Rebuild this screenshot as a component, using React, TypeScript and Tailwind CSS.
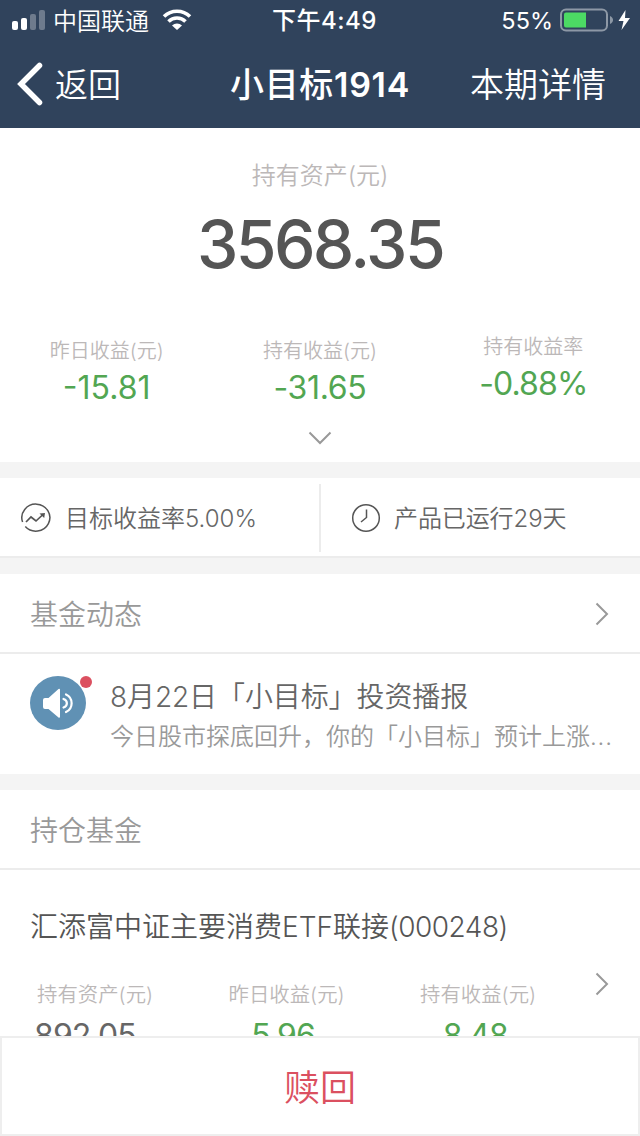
import clsx from "clsx";

interface StatProps {
  label: string;
  value: string;
  className?: string;
  valueClassName?: string;
}

function Stat({ label, value, className, valueClassName }: StatProps) {
  return (
    <div className={clsx("flex flex-1 flex-col items-center", className)}>
      <div className="text-[20px] font-[350] leading-7 text-[#bcb8b8]">
        {label}
      </div>
      <div
        className={clsx(
          "mt-[3px] text-[32px] leading-10 text-[#52a652]",
          valueClassName,
        )}
      >
        {value}
      </div>
    </div>
  );
}

function FundStat({ label, value, valueClassName }: StatProps) {
  return (
    <div className="w-[191.5px] shrink-0">
      <div className="pl-[7px] text-[20.4px] font-[350] leading-7 text-[#bcb8b8]">
        {label}
      </div>
      <div
        className={clsx(
          "mt-[7px] text-[32px] leading-10 tracking-[-0.9px]",
          valueClassName,
        )}
      >
        {value}
      </div>
    </div>
  );
}

function ChevronRight() {
  return (
    <svg width="14" height="24" viewBox="0 0 14 24" fill="none">
      <path d="M1.5 1.5 12 12 1.5 22.5" stroke="#999" strokeWidth="2" />
    </svg>
  );
}

function StatusBar() {
  return (
    <div className="flex h-10 items-center justify-between pl-3 pr-[8px] text-[24px] leading-10">
      <div className="flex w-[240px] items-center">
        <svg width="33" height="20" viewBox="0 0 33 20" fill="#fff">
          <rect x="0" y="11" width="6" height="9" rx="2" />
          <rect x="9" y="8" width="6" height="12" rx="2" />
          <rect x="18" y="4" width="6" height="16" rx="2" opacity="0.3" />
          <rect x="27" y="0" width="6" height="20" rx="2" opacity="0.3" />
        </svg>
        <span className="ml-2 pt-[3px] font-[350]">中国联通</span>
        <svg
          className="ml-[13px]"
          width="30"
          height="22"
          viewBox="0 0 30 22"
          fill="none"
          stroke="#fff"
          strokeWidth="3.6"
        >
          <path d="M2 7.5a18.6 18.6 0 0 1 26 0" />
          <path d="M6.5 12.5a12.2 12.2 0 0 1 17 0" />
          <path d="M10 16.4a7.2 7.2 0 0 1 10 0L15 21Z" fill="#fff" stroke="none" />
        </svg>
      </div>
      <span className="pl-[5px] pt-[2px] font-medium tracking-[0.5px]">
        下午4:49
      </span>
      <div className="flex w-[240px] items-center justify-end">
        <span className="pt-[2px] text-[23.5px]">55%</span>
        <svg
          className="ml-[7px]"
          width="72"
          height="24"
          viewBox="0 0 72 24"
          fill="none"
        >
          <rect
            x="1"
            y="1.5"
            width="46"
            height="21"
            rx="5"
            stroke="#8d98a6"
            strokeWidth="2"
          />
          <path d="M6 4.5h20v15H6a2 2 0 0 1-2-2v-11a2 2 0 0 1 2-2Z" fill="#4cd964" />
          <path d="M50 8c4 1.5 4 6.5 0 8Z" fill="#8d98a6" />
          <path d="M65.5 2 58.5 13h5L61.5 22 70 10h-5Z" fill="#fff" />
        </svg>
      </div>
    </div>
  );
}

function NavBar() {
  return (
    <div className="flex h-[88px] items-center justify-between pl-[17px] pr-[34px] text-[34px] leading-[86px]">
      <div className="flex w-[180px] items-center">
        <svg width="26" height="44" viewBox="0 0 26 44" fill="none">
          <path
            d="M22.5 3.5 4 22l18.5 18.5"
            stroke="#fff"
            strokeWidth="5.5"
            strokeLinecap="round"
          />
        </svg>
        <span className="ml-3 pt-[2px] text-[33px] font-[350]">返回</span>
      </div>
      <h1 className="pt-[2px] font-semibold tracking-[0.7px]">
        <span className="font-medium">小目标</span>1914
      </h1>
      <span className="w-[163px] pt-[2px] text-right font-[350]">本期详情</span>
    </div>
  );
}

function AssetSummary() {
  return (
    <section className="h-[334px] bg-white">
      <div className="flex flex-col items-center pt-[30px]">
        <div className="text-[24px] font-[350] leading-9 text-[#bcb8b8]">
          持有资产(元)
        </div>
        <div className="mt-2.5 text-[66px] font-medium leading-[80px] tracking-[-2.6px] text-[#555]">
          3568.35
        </div>
      </div>
      <div className="mt-[53px] flex">
        <Stat label="昨日收益(元)" value="-15.81" />
        <Stat
          label="持有收益(元)"
          value="-31.65"
          valueClassName="tracking-[-0.3px]"
        />
        <Stat
          label="持有收益率"
          value="-0.88%"
          className="-mt-1"
          valueClassName="tracking-[-0.9px]"
        />
      </div>
      <svg
        className="mx-auto mt-[23px]"
        width="24"
        height="14"
        viewBox="0 0 24 14"
        fill="none"
      >
        <path d="M1.5 1.5 12 12 22.5 1.5" stroke="#999" strokeWidth="2" />
      </svg>
    </section>
  );
}

function TargetRow() {
  return (
    <section className="mt-4 flex h-20 border-b-2 border-[#ececec] bg-white text-[24px] font-[350] leading-[76px] text-[#666]">
      <div className="flex w-[319px] items-center pl-[21px] pt-[2px]">
        <svg width="30" height="30" viewBox="0 0 30 30" fill="none" stroke="#555">
          <path d="M1.600 19A14 13.500 0 1 1 4.300 23.500" strokeWidth="1.5" />
          <path d="m5 19 5-5 5 4 7-6.5" strokeWidth="1.7" />
          <path d="M18.5 10.500 24 10l-.8 5Z" fill="#555" stroke="none" />
        </svg>
        <span className="ml-[14px] pt-px">目标收益率5.00%</span>
      </div>
      <div className="mb-1 mt-[6px] w-0.5 bg-[#ececec]" />
      <div className="flex items-center pl-[30px] pt-[2px]">
        <svg width="30" height="30" viewBox="0 0 30 30" fill="none" stroke="#555">
          <circle cx="15" cy="15" r="13.3" strokeWidth="1.5" />
          <path d="M15.5 6.5V14.5l-5.5 4.5" strokeWidth="1.5" />
        </svg>
        <span className="ml-[13px] pt-px tracking-[-0.1px]">
          产品已运行29天
        </span>
      </div>
    </section>
  );
}

function FundNews() {
  return (
    <section className="mt-4 bg-white">
      <div className="flex h-20 items-center justify-between border-b-2 border-[#ececec] pl-[30px] pr-[31px] pt-[2px]">
        <h2 className="pt-[2px] text-[28px] font-[350] leading-[74px] text-[#999]">
          基金动态
        </h2>
        <ChevronRight />
      </div>
      <div className="flex h-[120px] pl-[30px] pr-6 pt-[22px]">
        <div className="relative h-[54px] w-14 shrink-0">
          <svg width="56" height="54" viewBox="0 0 56 54" fill="none">
            <ellipse cx="28" cy="27" rx="28" ry="27" fill="#6091b4" />
            <path
              d="M15 22h3.5L28.5 13a1 1 0 0 1 1.5 .8v27a1 1 0 0 1-1.5 .8L18.5 33H15a2 2 0 0 1-2-2v-7a2 2 0 0 1 2-2Z"
              fill="#fff"
            />
            <path
              d="M33.5 23c4.500 1.500 4.500 7 0 8.500M36 18.500c7.500 3.500 7.500 14 0 17.500"
              stroke="#fff"
              strokeWidth="2.2"
              strokeLinecap="round"
            />
          </svg>
          <span className="absolute -right-1.5 top-0 size-3 rounded-full bg-[#db5060]" />
        </div>
        <div className="ml-6 min-w-0 flex-1 pt-px font-[350]">
          <div className="text-[28px] leading-10 tracking-[-0.1px] text-[#666]">
            8月22日「小目标」投资播报
          </div>
          <div className="whitespace-nowrap text-[24px] leading-10 text-[#999]">
            今日股市探底回升，你的「小目标」预计上涨
            <span className="tracking-[0.8px]">...</span>
          </div>
        </div>
      </div>
    </section>
  );
}

function HeldFunds() {
  return (
    <section className="mt-4 bg-white">
      <h2 className="h-20 border-b-2 border-[#ececec] pl-[30px] pt-[2px] text-[28px] font-[350] leading-[78px] text-[#999]">
        持仓基金
      </h2>
      <div className="pl-[30px] pr-[31px] pt-9">
        <h3 className="text-[28px] font-[350] leading-[42px] text-[#555]">
          汇添富中证主要消费ETF联接
          <span className="tracking-[-0.5px]">(000248)</span>
        </h3>
        <div className="mt-[33px] flex">
          <FundStat
            label="持有资产(元)"
            value="892.05"
            valueClassName="pl-1 text-[#666]"
          />
          <FundStat
            label="昨日收益(元)"
            value="-5.96"
            valueClassName="pl-4 text-[#52a652]"
          />
          <FundStat
            label="持有收益(元)"
            value="-8.48"
            valueClassName="pl-4 text-[#52a652]"
          />
          <div className="-ml-[10px] -mt-[9px] shrink-0">
            <ChevronRight />
          </div>
        </div>
      </div>
    </section>
  );
}

export default function App() {
  return (
    <div className="flex h-[1136px] w-[640px] flex-col overflow-hidden bg-[#f4f4f4] font-['Inter','Noto_Sans_CJK_SC',sans-serif]">
      <header className="h-32 shrink-0 bg-[#30435c] text-white">
        <StatusBar />
        <NavBar />
      </header>
      <main className="min-h-0 flex-1 overflow-hidden">
        <AssetSummary />
        <TargetRow />
        <FundNews />
        <HeldFunds />
      </main>
      <button className="h-[100px] shrink-0 border-2 border-[#eee] bg-white pt-1 text-[36px] font-[350] leading-[92px] text-[#db5060]">
        赎回
      </button>
    </div>
  );
}
